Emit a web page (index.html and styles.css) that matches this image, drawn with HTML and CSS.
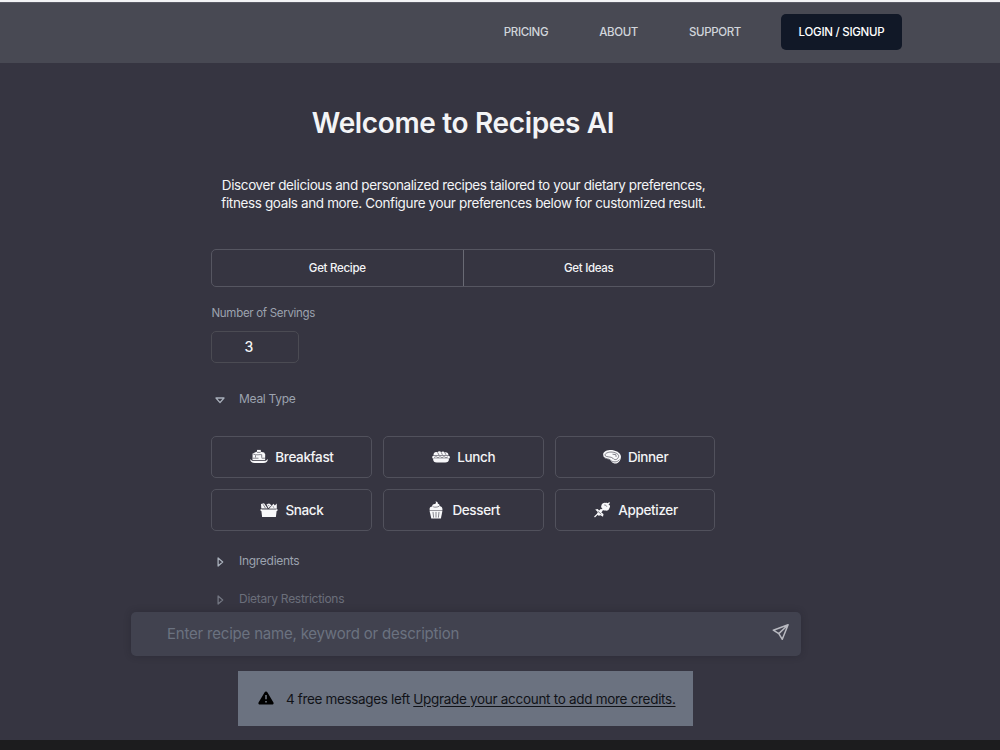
FILE: index.html
```html
<!DOCTYPE html>
<html lang="en">
<head>
<meta charset="utf-8">
<title>Recipes AI</title>
<link rel="stylesheet" href="styles.css">
</head>
<body>
<div class="page">
  <header class="header">
    <nav class="nav">
      <a class="nav-link pricing">PRICING</a>
      <a class="nav-link about">ABOUT</a>
      <a class="nav-link support">SUPPORT</a>
      <a class="login"><span>LOGIN / SIGNUP</span></a>
    </nav>
  </header>
  <main class="main">
    <h1 class="title"><span>Welcome to Recipes AI</span></h1>
    <p class="intro"><span class="line1">Discover delicious and personalized recipes tailored to your dietary preferences,</span><br><span class="line2">fitness goals and more. Configure your preferences below for customized result.</span></p>
    <div class="tabs">
      <button class="tab"><span>Get Recipe</span></button>
      <button class="tab"><span>Get Ideas</span></button>
    </div>
    <div class="label"><span>Number of Servings</span></div>
    <div class="servings">3</div>
    <div class="section open">
      <svg class="arrow" viewBox="0 0 12 12"><path d="M2 4h8L6 8.6z"/></svg>
      <span>Meal Type</span>
    </div>
    <div class="meals">
      <button class="meal">
        <svg class="icon" viewBox="0 0 18 18"><path d="M2.6 5.4 8 3.2l6.2 1.4 1 2-.1 5.7H2.5z"/><path d="M7 1.9h3.8v2.2H7z"/><path d="M.4 11.2 2 12.8h14l1.6-1.8c.5 1.8-.8 3.9-4.4 4H4.8C1.5 14.9-.2 13 .4 11.2z"/><path class="cut" d="M3.2 6c3 1.8 7 .1 8.5.7v3M5.5 7.3v2.2M2.7 10.2h5.8M11.7 10.2h3.2M2.300 12.500h13.200M7 4.400h3.500"/></svg>
        <span>Breakfast</span>
      </button>
      <button class="meal">
        <svg class="icon" viewBox="0 0 18 18"><path d="M1.5 7.3c0-3.6 2.8-3.5 3.8-2.8C6.3 3 8.5 3 9.1 4.3c1-1.3 3-1.1 3.6.1 1.9-.6 3.8.4 3.8 2.9z"/><path d="M1.3 7.7h15.4c1.6.5 1.6 2.6 0 3H1.3C-.2 10.2-.2 8.2 1.3 7.7z"/><path d="M1.1 11h15.8c.1 2.6-1.4 3.5-3.7 3.5H4.8c-2.4 0-3.7-1-3.7-3.5z"/><path class="cut" d="M5.7 4.6 7 7M9.2 4.3l1.2 2.5M12.7 4.4 14 6.8M2 9.5l2-.8 2 1 2-1 2 1 2-1 2 1 2-.8"/></svg>
        <span>Lunch</span>
      </button>
      <button class="meal">
        <svg class="icon" viewBox="0 0 18 18"><path d="M.2 7C-.3 2.9 6.2 1.6 10.2 2.3c5 .9 8.6 4.1 7.6 7.7-.6 3.7-3.5 6-6.4 5.5-3.6-.7-2.8-3.6-6.3-4.2C2.2 10.8.4 9.6.2 7z"/><path class="cut" d="M2 7.4c-.5-2.2 4-3.7 7.2-3.3 4.2.5 7 2.4 6.4 4.5-.9 3.6-4.3 3.5-5.4 1.9C8.4 8.2 2.8 9.5 2 7.4zM1 9.4c2 1.7 4.8 1 6.5 2.8 2.3 2.2 6.9 2.5 9-.7M9.5 6.2l3.4.5.2 2.2"/></svg>
        <span>Dinner</span>
      </button>
      <button class="meal">
        <svg class="icon" viewBox="0 0 18 18"><path d="M1.3 9.3h15.4l-.8 6.7H2.1z"/><path d="M.6 8.1h16.8v2H.6zM1 3l3-.8 3.7 5.3H1.3zM6.5 3.3l2.6-.9 2.4 1.9-3.1 2.9zM9 7.7l4.5-4.9 1.3 1.8 2-2.2v5.300z"/><path class="cut" d="m3.1 3.3 2.4 4M8 3.8l1.5 1.5M1.5 8.3h15M12.7 5.3l1.5 1.4"/></svg>
        <span>Snack</span>
      </button>
      <button class="meal">
        <svg class="icon" viewBox="0 0 18 18"><path d="M8.6.3c1.7.6 2.6 1.4 2.2 2.4 1.5.3 2.1 1.2 1.7 2.3 2.2.3 3.2 1.7 2.9 3.9H2.7C2.2 6.5 3.6 5.6 5.4 5.6 4.8 4.1 6 3.1 7.7 3 9 2.8 9.3 1.8 8.6.3z"/><path d="M2.5 9.4h13l-1.6 8.1H4.3z"/><path class="cut" d="M6 10.9l.6 5.7M9 10.9v5.7M12 10.9l-.6 5.7M6.2 5.8c1.8.7 4.2.4 6-.6"/></svg>
        <span>Dessert</span>
      </button>
      <button class="meal">
        <svg class="icon" viewBox="0 0 18 18"><path class="skewer" d="M1.5 16 16.6 1.5"/><path d="M8.4 4.500c.4-2 2.500-3 4.300-2.500.9-.6 2.800.2 2.800 1.600 1.700.4 1.900 2.400 1 3.200-.2 2.100-2.300 3.300-4.200 2.700-1.700.5-2.900-.7-2.700-2-1.200-.4-1.800-1.800-1.200-3z"/><path d="m2.200 8.600 2.500-.7 1.400 1.600L8 7.800l1.900 1.800L8.300 11.500l2.200 1.500-.5 2.800-2.500-1.500-1.900.5-1.500-1.600.7-2.300z"/><path class="cut" d="M11.200 4c1.200-.3 2.300.6 2.600 1.700M5 10.400l3.300 2.900"/></svg>
        <span>Appetizer</span>
      </button>
    </div>
    <div class="section ingredients">
      <svg class="arrow" viewBox="0 0 12 12"><path d="M4.100 2v8l4.600-4z"/></svg>
      <span>Ingredients</span>
    </div>
    <div class="section dietary">
      <svg class="arrow" viewBox="0 0 12 12"><path d="M4.100 2v8l4.600-4z"/></svg>
      <span>Dietary Restrictions</span>
    </div>
  </main>
  <div class="composer">
    <span class="placeholder">Enter recipe name, keyword or description</span>
    <svg class="send" viewBox="0 0 18 18"><path d="M16.100 1.700 1.300 7.200l5.500 3.400 3.500 5.700zM16.100 1.700 6.800 10.600"/></svg>
  </div>
  <div class="notice">
    <svg class="warning" viewBox="0 0 16 14"><path d="M8 .4c.7 0 1.100.3 1.500 1l5.800 9.900c.8 1.300.1 2.300-1.300 2.300H2c-1.400 0-2.100-1-1.300-2.300l5.800-9.900C6.900.7 7.300.4 8 .4z"/><path class="mark" d="M8 4.100v4.200M8 10.100v1.500"/></svg>
    <span class="notice-text">4 free messages left <a class="upgrade">Upgrade your account to add more credits.</a></span>
  </div>
  <footer class="footer"></footer>
</div>
</body>
</html>
```
FILE: styles.css
```css
* { box-sizing: border-box; }
body { margin: 0; background: #363541; font-family: Inter, "Liberation Sans", sans-serif; }
.page { display: flex; flex-direction: column; height: 750px; overflow: hidden; border-top: 2px solid #f3f4f6; }
button { font: inherit; letter-spacing: inherit; color: inherit; background: none; padding: 0; margin: 0; }
svg { display: block; flex: none; }

.header { flex: none; height: 61px; background: #484953; border-top: 1px solid #5b5c67; padding: 11px 98px 0 0; }
.nav { display: flex; justify-content: flex-end; align-items: center; height: 36px; font-size: 11.5px; letter-spacing: -.35px; font-weight: 500; color: #d1d5db; }
.nav-link, .login span { padding-bottom: 1px; }
.pricing { margin-right: 51px; }
.about { margin-right: 51px; }
.support { margin-right: 40px; }
.login { display: flex; align-items: center; justify-content: center; width: 121px; height: 36px; border-radius: 5px; background: #111827; color: #fff; letter-spacing: -.27px; }

.main { flex: none; width: 504px; height: 549px; margin-left: 211px; display: flex; flex-direction: column; }
.title { margin: 42px 0 0; height: 36px; line-height: 36px; font-size: 28px; font-weight: 600; letter-spacing: -.35px; color: #f3f4f6; text-align: center; }
.intro { margin: 35px -10px 0; height: 36px; line-height: 18px; font-size: 13.5px; letter-spacing: -.37px; color: #f3f4f6; text-align: center; white-space: nowrap; padding-left: 1px; }
.tabs { display: flex; margin-top: 37px; height: 38px; border: 1px solid #565661; border-radius: 5px; }
.tab { flex: 1; border: 0; padding-bottom: 1px; font-size: 11.5px; letter-spacing: -.3px; font-weight: 500; color: #f3f4f6; }
.tab + .tab { border-left: 1px solid #696a74; }
.label { margin-top: 17px; height: 18px; line-height: 18px; font-size: 11.5px; letter-spacing: -.3px; color: #9ca3af; padding-left: .5px; }
.servings { margin-top: 9px; width: 88px; height: 32px; border: 1px solid #4b4b53; border-radius: 5px; font-size: 14px; font-weight: 500; line-height: 30px; color: #f3f4f6; padding-left: 32.5px; }
.section { display: flex; align-items: center; height: 18px; font-size: 12px; letter-spacing: -.28px; color: #9ca3af; }
.section span { padding-bottom: 2px; }
.arrow { width: 12px; height: 12px; margin: 1px 13px 0 3px; fill: none; stroke: #a8afba; stroke-width: 1.3; stroke-linejoin: round; }
.open { margin-top: 27px; }
.meals { display: grid; grid-template-columns: repeat(3, 1fr); grid-auto-rows: 42px; gap: 11px; margin: 28px -.5px 0 0; }
.meal { display: flex; align-items: center; justify-content: center; gap: 7px; border: 1px solid #51515c; border-radius: 5px; font-size: 13.5px; letter-spacing: -.36px; font-weight: 500; color: #f3f4f6; padding-left: 1px; }
.icon { width: 18px; height: 18px; fill: #f8f8fa; }
.cut { fill: none; stroke: #464550; stroke-width: .65; }
.skewer { fill: none; stroke: #f8f8fa; stroke-width: 1.2; }
.ingredients { margin-top: 21px; }
.dietary { margin-top: 20px; opacity: .52; }

.composer { flex: none; display: flex; align-items: center; justify-content: space-between; width: 670px; height: 44px; margin-left: 131px; padding: 0 11px 0 36px; border-radius: 5px; background: #41424f; box-shadow: 0 0 7px rgba(25, 25, 35, .3); }
.placeholder { padding-bottom: 1px; font-size: 15px; letter-spacing: -.2px; color: #6b7280; }
.send { width: 18px; height: 18px; margin-top: -4px; fill: none; stroke: #b8b9c0; stroke-width: 1.5; stroke-linejoin: round; }
.notice { flex: none; display: flex; align-items: center; width: 455px; height: 55px; margin: 15px 0 0 238px; padding-left: 20px; background: #6b7280; color: #111318; font-size: 13.5px; letter-spacing: -.34px; white-space: nowrap; }
.warning { width: 16px; height: 14px; margin: -2px 12px 0 0; fill: #000; }
.mark { stroke: #777d88; stroke-width: 1.5; }
.upgrade { letter-spacing: -.3px; text-decoration: underline; text-underline-offset: 2px; }
.footer { flex: none; height: 10px; margin-top: 14px; background: #1c1c1e; }
```
